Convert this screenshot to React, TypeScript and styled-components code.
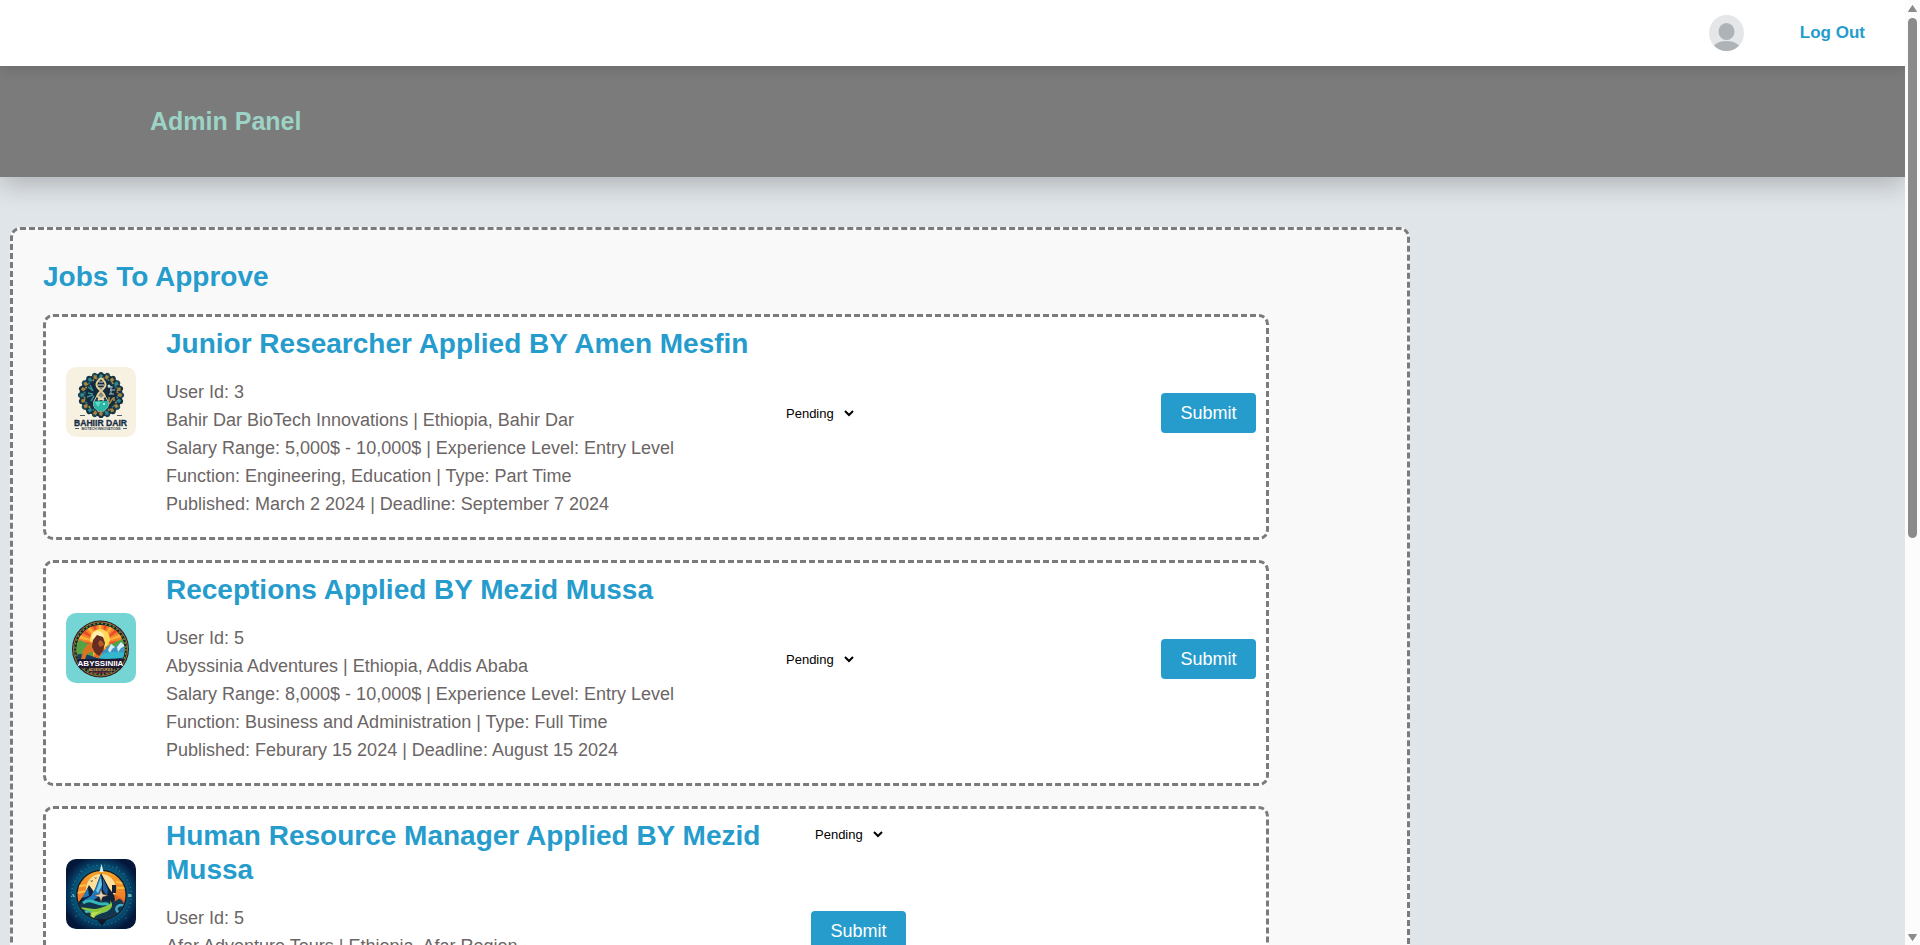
import React, { useState } from "react";
import styled, { createGlobalStyle } from "styled-components";

const blue = "#269ccd";
const grey = "#7b7b7b";

const GlobalStyle = createGlobalStyle`
  *, *::before, *::after { box-sizing: border-box; }
  body {
    margin: 0;
    background: #e0e5e9;
    color: #6b6565;
    font-family: "Liberation Sans", Arial, sans-serif;
  }
  h1, h2, h3, p { margin: 0; }
`;

const Shell = styled.div`
  display: grid;
  grid-template-columns: minmax(0, 1fr) 15px;
  height: 100vh;
`;

const Page = styled.div`
  overflow-x: hidden;
  overflow-y: auto;
  scrollbar-width: none;
`;

const ScrollRail = styled.div`
  display: flex;
  flex-direction: column;
  align-items: center;
  padding: 5px 0 4px;
  background: #fcfcfc;
`;

const ScrollThumb = styled.div`
  width: 9px;
  height: 55vh;
  margin: 6px 0 auto;
  border-radius: 5px;
  background: #8b8b8b;
`;

const TopBar = styled.header`
  position: relative;
  z-index: 1;
  display: flex;
  align-items: center;
  justify-content: flex-end;
  gap: 56px;
  height: 66px;
  padding: 0 40px;
  background: #fff;
  box-shadow: 0 4px 12px rgba(0, 0, 0, 0.12);
`;

const LogOut = styled.a`
  color: ${blue};
  font-size: 17px;
  font-weight: 700;
  line-height: 20px;
  text-decoration: none;
`;

const Banner = styled.div`
  display: flex;
  align-items: center;
  height: 111px;
  padding: 0 150px 2px;
  background: ${grey};
  box-shadow: 0 8px 24px rgba(0, 0, 0, 0.22);
`;

const BannerTitle = styled.h1`
  color: #9dd3c5;
  font-size: 25px;
  font-weight: 700;
  line-height: 30px;
`;

const Panel = styled.main`
  max-width: 1400px;
  margin: 50px 10px;
  padding: 30px 138px 30px 30px;
  border: 3px dashed ${grey};
  border-radius: 10px;
  background: #f9f9f9;
`;

const PanelTitle = styled.h2`
  margin-bottom: 20px;
  color: ${blue};
  font-size: 28px;
  line-height: 34px;
`;

const JobList = styled.div`
  display: flex;
  flex-direction: column;
  gap: 20px;
`;

const Card = styled.article`
  display: flex;
  padding: 10px 10px 19px 20px;
  border: 3px dashed ${grey};
  border-radius: 10px;
  background: #fff;
`;

const LogoBox = styled.div`
  flex: none;
  width: 70px;
  height: 70px;
  margin: 40px 30px 0 0;
  border-radius: 10px;
  overflow: hidden;

  svg { display: block; }
`;

const Info = styled.div<{ $wide?: boolean }>`
  flex: 0 1 ${(p) => (p.$wide ? 645 : 616)}px;
`;

const JobTitle = styled.h3`
  margin-bottom: 17px;
  color: ${blue};
  font-size: 28px;
  line-height: 34px;
`;

const Line = styled.p`
  font-size: 18px;
  line-height: 28px;
`;

const Actions = styled.form<{ $stacked?: boolean }>`
  display: flex;
  flex: 1;
  flex-direction: ${(p) => (p.$stacked ? "column" : "row")};
  align-items: ${(p) => (p.$stacked ? "flex-start" : "center")};
  align-self: flex-start;
  justify-content: space-between;
  gap: ${(p) => (p.$stacked ? 67 : 0)}px;
  padding-top: ${(p) => (p.$stacked ? 5 : 66)}px;
`;

const Status = styled.select`
  width: 75px;
  height: 20px;
  border: 0;
  background: transparent;
  color: #000;
  font: 13px "Liberation Sans", Arial, sans-serif;
`;

const Submit = styled.button`
  width: 95px;
  height: 40px;
  border: 0;
  border-radius: 4px;
  background: ${blue};
  color: #fff;
  font: 18px "Liberation Sans", Arial, sans-serif;
`;

const Avatar = () => (
  <svg width="35" height="36" viewBox="0 0 35 36" role="img" aria-label="Profile">
    <defs>
      <clipPath id="avatar-clip"><ellipse cx="17.5" cy="18" rx="17.5" ry="18" /></clipPath>
    </defs>
    <g clipPath="url(#avatar-clip)">
      <rect width="35" height="36" fill="#e4e6e8" />
      <ellipse cx="17.5" cy="16.5" rx="8" ry="8.6" fill="#adb3b7" />
      <path d="M2 36 C4 29 10 26 17.5 26 S31 29 33 36Z" fill="#adb3b7" />
    </g>
  </svg>
);

const ring = (n: number, draw: (angle: number, i: number) => React.ReactNode) =>
  Array.from({ length: n }, (_, i) => draw((i * 360) / n, i));

const BahirDarLogo = () => (
  <svg width="70" height="70" viewBox="0 0 70 70" role="img" aria-label="Bahir Dar BioTech logo">
    <rect width="70" height="70" fill="#f7f1e1" />
    <circle cx="35" cy="28" r="21.500" fill="#173344" />
    {ring(20, (a, i) => (
      <g key={i} transform={`rotate(${a} 35 28)`}>
        <circle cx="35" cy="7.500" r="2.600" fill={i % 2 ? "#1f4652" : "#16303f"} />
        <path d="M34 7l3 1-1 4-3-2z" fill={i % 3 ? "#a9853f" : "#2e8a90"} />
        <circle cx="37.500" cy="11.500" r="1" fill={i % 2 ? "#2c7d85" : "#b08a48"} />
      </g>
    ))}
    <circle cx="35" cy="28" r="15" fill="#122c3e" />
    <path d="M22 20l4 3m-2-5l3 6m-5 2l5 1m-6 3l6-2m-2 6l3-5" stroke="#3a8d93" strokeWidth="1.500" />
    <path d="M42 20h5m-3 3h5m-6 4h5m-3-8v8" stroke="#aebfc2" strokeWidth="1" />
    <circle cx="43" cy="19" r="1.500" fill="#b9e0df" />
    <path d="M43 37l4-6m-4 3v-4m5 4v-4" stroke="#b18a43" strokeWidth="1.500" />
    <path d="M32 27l-4 7a7.500 7.500 0 1 0 14 0l-4-7z" fill="#21414d" stroke="#d9d3b5" strokeWidth="1" />
    <path d="M28 34h14a7.500 7.500 0 1 1-14 0z" fill="#2cb5a5" />
    <path d="M29 35h6l-3 5z" fill="#62dac6" />
    <circle cx="38" cy="37" r="1" fill="#d5f8ec" />
    <path d="M35 11c-6 5-6 8 0 13s4 6-3 9M35 11c6 5 6 8 0 13s-4 6 3 9" fill="none" stroke="#e8cf96" strokeWidth="2" />
    <path d="M33 15h4m-5 3h6m-5 3h4m-4 8h4m-5 3h6" stroke="#e7e4d3" strokeWidth="1" />
    <path d="M14 48.500h5m32 0h5" stroke="#506068" strokeWidth="1" />
    <text x="34.500" y="59" textAnchor="middle" fontFamily="Liberation Sans, sans-serif" fontWeight="700" fontSize="8.600" fill="#172d42" stroke="#172d42" strokeWidth="0.300">BAHIIR DAIR</text>
    <text x="35" y="63" textAnchor="middle" fontFamily="Liberation Sans, sans-serif" fontWeight="700" fontSize="3.400" fill="#33444e">BIOTECH INNOVATIONS</text>
    <path d="M9 61.500h4m44 0h4" stroke="#506068" strokeWidth="1" />
  </svg>
);

const AbyssiniaLogo = () => (
  <svg width="70" height="70" viewBox="0 0 70 70" role="img" aria-label="Abyssinia Adventures logo">
    <defs>
      <clipPath id="aby-clip"><circle cx="34.500" cy="36" r="24" /></clipPath>
    </defs>
    <rect width="70" height="70" fill="#75d5d4" />
    <circle cx="34.500" cy="36" r="28.500" fill="#241d2b" />
    <circle cx="34.500" cy="36" r="27" fill="none" stroke="#a6762f" strokeWidth="1" />
    <circle cx="34.500" cy="36" r="25.500" fill="none" stroke="#4c9a42" strokeWidth="1.500" strokeDasharray="2 2" />
    <g clipPath="url(#aby-clip)">
      <rect x="8" y="8" width="54" height="56" fill="#f5812b" />
      {ring(20, (a, i) => (
        <path key={i} d="M34.500 30L31 0h5z" fill={i % 2 ? "#e94b28" : "#fdb23a"} transform={`rotate(${a} 34.500 30)`} />
      ))}
      <circle cx="34" cy="26" r="10" fill="#ffd95a" />
      <circle cx="32" cy="24" r="6" fill="#fff2ae" />
      <path d="M8 32l6-5 6 3 7 2v16H8zM62 32l-6-6-6 3-9 4v16h21z" fill="#50a445" />
      <path d="M35 40l10-9 4 3 6-5 8 9v12H35z" fill="#3f94c6" />
      <path d="M45 31l4 3-3 2-2 4-2-3zM55 29l4 4-4 2-3 4-1-5z" fill="#d9f0f3" />
      <path d="M34 42c10-5 17-2 28-3v10H32z" fill="#35b8cb" />
      <path d="M8 42c8-2 13-1 20 2s20 2 34 0v6H8z" fill="#183d64" />
      <path d="M15 45l2-8 5-6 7-3 8 4-1 9-3 4h-3l1-5-6-1-4 2-2 5h-4l2-6z" fill="#d87525" />
      <path d="M27 27l4-5 6 2 2 6-2 8-4 5-4-3-3-6z" fill="#662c21" />
      <path d="M34 27l3 2 1 3-4 2-2-4z" fill="#b45a29" />
      <rect x="8" y="46" width="54" height="20" fill="#1f1b31" />
      <path d="M17 57h35l-6 6H24z" fill="#372438" />
    </g>
    <path d="M11 46h47l-2 9H13z" fill="#201a30" />
    <text x="34.500" y="53" textAnchor="middle" fontFamily="Liberation Sans, sans-serif" fontWeight="700" fontSize="8" fill="#fff">ABYSSINIIA</text>
    <text x="34.500" y="57.500" textAnchor="middle" fontFamily="Liberation Sans, sans-serif" fontWeight="700" fontSize="3.500" fill="#dcae58">ADVENTURES</text>
    <path d="M24 60h21" stroke="#b4363c" strokeWidth="1" strokeDasharray="2 1" />
  </svg>
);

const AfarLogo = () => (
  <svg width="70" height="70" viewBox="0 0 70 70" role="img" aria-label="Afar Adventure Tours logo">
    <defs>
      <radialGradient id="afar-night">
        <stop offset="0.500" stopColor="#087796" />
        <stop offset="0.750" stopColor="#07466c" />
        <stop offset="1" stopColor="#04163a" />
      </radialGradient>
      <linearGradient id="afar-sky" x1="0" y1="0" x2="0" y2="1">
        <stop offset="0" stopColor="#f7a528" />
        <stop offset="1" stopColor="#ed5e26" />
      </linearGradient>
      <clipPath id="afar-clip"><circle cx="35.500" cy="36" r="24" /></clipPath>
    </defs>
    <rect width="70" height="70" fill="#04163a" />
    <circle cx="35" cy="35" r="39" fill="url(#afar-night)" />
    <circle cx="35.500" cy="36" r="30" fill="none" stroke="#2598a8" strokeWidth="1" strokeDasharray="1 3" />
    <path d="M29 58l7 9 7-9z" fill="#101a2b" />
    <circle cx="35.500" cy="36" r="25.500" fill="#14202d" />
    <g clipPath="url(#afar-clip)">
      <rect x="10" y="10" width="52" height="52" fill="url(#afar-sky)" />
      <circle cx="35" cy="30" r="15" fill="#ffdf9a" />
      <path d="M10 28l10-2m-9 8l9-2m30-9l12 2m-11 4h11" stroke="#fbbf42" strokeWidth="2" />
      <path d="M9 48l9-12 5-10 5 7 7-19 8 15 5 7 12 7v20H9z" fill="#102239" />
      <path d="M35 15l-5 13-5 9-7 4 2 5 12-8 4-9zM22 29l-6 10 7-2z" fill="#2179bd" />
      <path d="M37 19l5 12-1 6-4-6z" fill="#1d5f9c" />
      <path d="M35 18l1 8-4 8-2-2z" fill="#70c9e5" />
      <path d="M48 35l9 5 3 6-8-2-7 3 4-6z" fill="#dd6825" />
      <path d="M46 26h4v8h-4z" fill="#182033" />
      <path d="M12 47c10-12 17-3 24-5s10 3 15-1 6 4 9 6l-6 13-35 5z" fill="#12364d" />
      <path d="M17 44c8-6 13 2 20 1s8 5 1 7-14-2-19 1" fill="none" stroke="#35b8ba" strokeWidth="3" />
      <path d="M60 48c-6-5-13 1-8 5s5 6-2 7" fill="none" stroke="#3da8c5" strokeWidth="2.500" />
      <path d="M13 49c7-2 13 3 21 0s12-3 10-8c6 8-2 11-10 14s-8 5 3 9c-10 1-15-5-12-9s-5-3-12-6z" fill="#8bc83d" />
      <path d="M19 52c8 3 13 1 18-1-5 4-11 4-8 10-6-4 0-7-10-9z" fill="#c1df57" />
    </g>
    <path d="M35 30l1.500 5 5.500 1.500-5.500 1.500-1.500 5-1.500-5-5.500-1.500 5.500-1.500z" fill="#ead2ab" stroke="#4d3a38" strokeWidth="0.500" />
    <path d="M35.500 5l2 8h-4z" fill="#d7f3ef" />
    <path d="M23 21l2 1 2-1-1 2zM28 18l2 1 1-1-1 2z" fill="#2e2b2f" />
    <text x="5" y="38" fontFamily="Liberation Serif, serif" fontWeight="700" fontSize="5" fill="#c4e5e5">A</text>
    <text x="62" y="38" fontFamily="Liberation Serif, serif" fontWeight="700" fontSize="5" fill="#c4e5e5">R</text>
    <g fill="#42bdc6">
      <circle cx="15" cy="12" r="0.500" /><circle cx="22" cy="6" r="0.500" /><circle cx="51" cy="8" r="0.500" />
      <circle cx="58" cy="15" r="0.500" /><circle cx="10" cy="57" r="0.500" /><circle cx="60" cy="59" r="0.500" />
    </g>
  </svg>
);

interface Job {
  id: string;
  title: string;
  lines: string[];
  Logo: () => React.ReactElement;
  stacked?: boolean;
}

const jobs: Job[] = [
  {
    id: "researcher",
    title: "Junior Researcher Applied BY Amen Mesfin",
    Logo: BahirDarLogo,
    lines: [
      "User Id: 3",
      "Bahir Dar BioTech Innovations | Ethiopia, Bahir Dar",
      "Salary Range: 5,000$ - 10,000$ | Experience Level: Entry Level",
      "Function: Engineering, Education | Type: Part Time",
      "Published: March 2 2024 | Deadline: September 7 2024",
    ],
  },
  {
    id: "receptions",
    title: "Receptions Applied BY Mezid Mussa",
    Logo: AbyssiniaLogo,
    lines: [
      "User Id: 5",
      "Abyssinia Adventures | Ethiopia, Addis Ababa",
      "Salary Range: 8,000$ - 10,000$ | Experience Level: Entry Level",
      "Function: Business and Administration | Type: Full Time",
      "Published: Feburary 15 2024 | Deadline: August 15 2024",
    ],
  },
  {
    id: "hr-manager",
    title: "Human Resource Manager Applied BY Mezid Mussa",
    Logo: AfarLogo,
    stacked: true,
    lines: ["User Id: 5", "Afar Adventure Tours | Ethiopia, Afar Region"],
  },
];

const JobCard = ({ id, title, lines, Logo, stacked }: Job) => {
  const [status, setStatus] = useState("Pending");
  return (
    <Card>
      <LogoBox><Logo /></LogoBox>
      <Info $wide={stacked}>
        <JobTitle>{title}</JobTitle>
        {lines.map((line) => <Line key={line}>{line}</Line>)}
      </Info>
      <Actions $stacked={stacked} onSubmit={(e) => e.preventDefault()}>
        <Status
          id={`status-${id}`}
          aria-label={`Status of ${title}`}
          value={status}
          onChange={(e) => setStatus(e.target.value)}
        >
          <option>Pending</option>
          <option>Approve</option>
        </Status>
        <Submit type="submit">Submit</Submit>
      </Actions>
    </Card>
  );
};

export default function App() {
  return (
    <>
      <GlobalStyle />
      <Shell>
        <Page>
          <TopBar>
            <Avatar />
            <LogOut href="#logout">Log Out</LogOut>
          </TopBar>
          <Banner>
            <BannerTitle>Admin Panel</BannerTitle>
          </Banner>
          <Panel>
            <PanelTitle>Jobs To Approve</PanelTitle>
            <JobList>
              {jobs.map((job) => <JobCard key={job.id} {...job} />)}
            </JobList>
          </Panel>
        </Page>
        <ScrollRail aria-hidden="true">
          <svg width="9" height="7" viewBox="0 0 9 7"><path d="M4.500 0.500L8.500 6.500h-8z" fill="#8b8b8b" stroke="#8b8b8b" strokeLinejoin="round" /></svg>
          <ScrollThumb />
          <svg width="9" height="7" viewBox="0 0 9 7"><path d="M4.500 6.500L8.500 0.500h-8z" fill="#8b8b8b" stroke="#8b8b8b" strokeLinejoin="round" /></svg>
        </ScrollRail>
      </Shell>
    </>
  );
}
